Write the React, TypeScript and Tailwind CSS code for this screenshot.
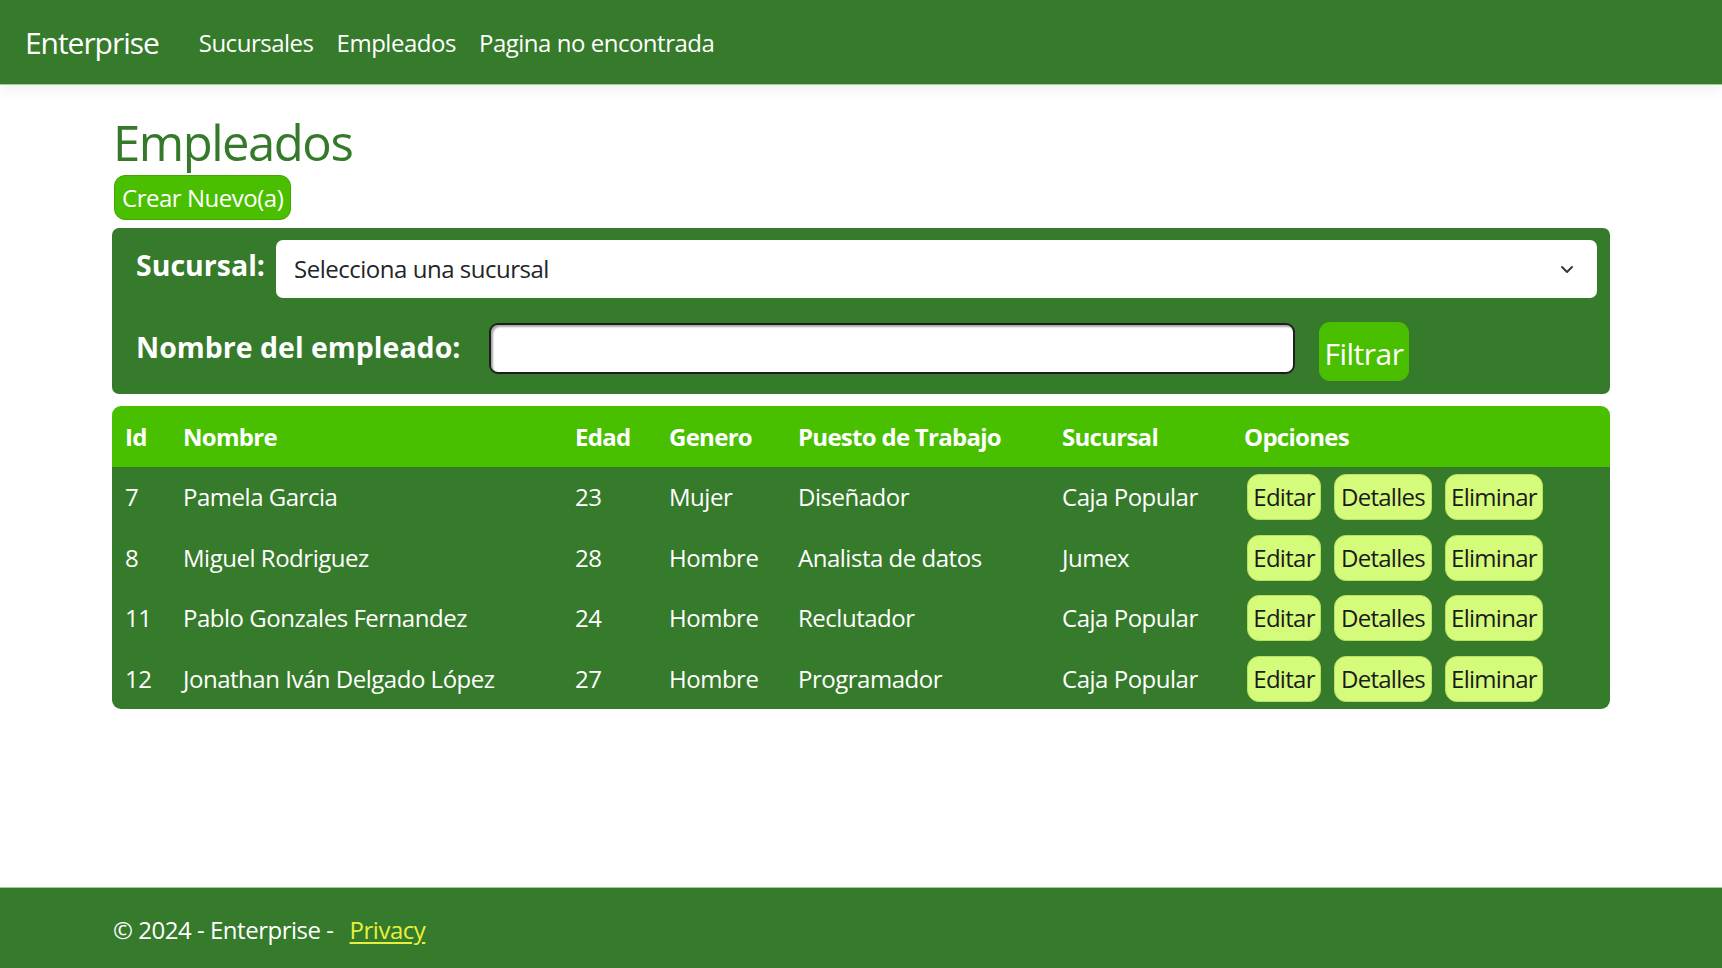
import React from 'react';

const empleados = [
  { id: 7, nombre: 'Pamela Garcia', edad: 23, genero: 'Mujer', puesto: 'Diseñador', sucursal: 'Caja Popular' },
  { id: 8, nombre: 'Miguel Rodriguez', edad: 28, genero: 'Hombre', puesto: 'Analista de datos', sucursal: 'Jumex' },
  { id: 11, nombre: 'Pablo Gonzales Fernandez', edad: 24, genero: 'Hombre', puesto: 'Reclutador', sucursal: 'Caja Popular' },
  { id: 12, nombre: 'Jonathan Iván Delgado López', edad: 27, genero: 'Hombre', puesto: 'Programador', sucursal: 'Caja Popular' },
];

const font = { fontFamily: '"Open Sans", "Noto Sans", sans-serif' };

const OptionButton = ({ label, width }: { label: string; width: string }) => (
  <button className={`${width} h-[46px] rounded-[12px] border border-[#b9e060] bg-[#d5fb7a] text-[24px] tracking-[-0.03em] text-[#1b1b1b]`}>
    {label}
  </button>
);

export default function App() {
  return (
    <div className="min-h-screen flex flex-col bg-white text-[24px] tracking-[-0.02em]" style={font}>
      <header className="h-[85px] bg-[#367a2b] border-b border-[#9fd08a] shadow-[0_6px_14px_rgba(0,0,0,0.06)] flex items-center pl-[25px]">
        <span className="text-[30px] tracking-[-0.035em] text-white mr-[40px]">Enterprise</span>
        <nav className="flex gap-[23px] text-white pt-[2px]">
          <a>Sucursales</a>
          <a>Empleados</a>
          <a>Pagina no encontrada</a>
        </nav>
      </header>

      <main className="flex-1 px-[112px] pt-[26px]">
        <h1 className="text-[49px] leading-[62px] tracking-[-0.03em] text-[#35792a] pl-[1px] font-normal">Empleados</h1>
        <button className="mt-[2px] ml-[2px] h-[45px] px-[7px] rounded-[11px] bg-[#4abf00] border border-[#3fa800] text-white text-[24px]">
          Crear Nuevo(a)
        </button>

        <div className="mt-[8px] bg-[#367a2b] rounded-[7px] pl-[24px] pr-[13px] pt-[12px] pb-[13px] flex flex-col gap-[24px]">
          <div className="flex items-start">
            <label className="text-white font-bold text-[28.5px] tracking-normal leading-[50px] w-[140px] shrink-0">Sucursal:</label>
            <div className="flex-1 h-[58px] bg-white rounded-[7px] flex items-center justify-between pl-[18px] pr-[22px] text-[#212529]">
              <span>Selecciona una sucursal</span>
              <svg width="16" height="16" viewBox="0 0 16 16" fill="none" stroke="#343a40" strokeWidth="2" strokeLinecap="round" strokeLinejoin="round">
                <path d="M3 6l5 5 5-5" />
              </svg>
            </div>
          </div>
          <div className="flex items-start">
            <label className="text-white font-bold text-[28.5px] tracking-normal leading-[50px] w-[353px] shrink-0">Nombre del empleado:</label>
            <input className="mt-[1px] w-[806px] h-[51px] bg-white rounded-[9px] border-[2px] border-[#1e1e1e] shadow-[inset_2px_2px_2px_rgba(0,0,0,0.35)] outline-none" />
            <button className="ml-[24px] w-[90px] h-[59px] rounded-[11px] bg-[#4abf00] text-white text-[30px] pt-[4px]">Filtrar</button>
          </div>
        </div>

        <table className="mt-[12px] w-full table-fixed border-separate border-spacing-0 rounded-[9px] overflow-hidden">
          <colgroup>
            <col className="w-[58px]" />
            <col className="w-[392px]" />
            <col className="w-[94px]" />
            <col className="w-[129px]" />
            <col className="w-[264px]" />
            <col className="w-[182px]" />
            <col />
          </colgroup>
          <thead>
            <tr className="bg-[#48c000] text-white h-[61px] text-left">
              <th className="pl-[13px] font-bold tracking-[-0.03em]">Id</th>
              <th className="pl-[13px] font-bold tracking-[-0.03em]">Nombre</th>
              <th className="pl-[13px] font-bold tracking-[-0.03em]">Edad</th>
              <th className="pl-[13px] font-bold tracking-[-0.03em]">Genero</th>
              <th className="pl-[13px] font-bold tracking-[-0.03em]">Puesto de Trabajo</th>
              <th className="pl-[13px] font-bold tracking-[-0.03em]">Sucursal</th>
              <th className="pl-[13px] font-bold tracking-[-0.03em]">Opciones</th>
            </tr>
          </thead>
          <tbody className="bg-[#367a2b] text-white">
            {empleados.map((e) => (
              <tr key={e.id} className="h-[60.5px]">
                <td className="pl-[13px]">{e.id}</td>
                <td className="pl-[13px]">{e.nombre}</td>
                <td className="pl-[13px]">{e.edad}</td>
                <td className="pl-[13px]">{e.genero}</td>
                <td className="pl-[13px]">{e.puesto}</td>
                <td className="pl-[13px]">{e.sucursal}</td>
                <td className="pl-[16px]">
                  <div className="flex gap-[13px]">
                    <OptionButton label="Editar" width="w-[74px]" />
                    <OptionButton label="Detalles" width="w-[98px]" />
                    <OptionButton label="Eliminar" width="w-[98px]" />
                  </div>
                </td>
              </tr>
            ))}
          </tbody>
        </table>
      </main>

      <footer className="h-[81px] bg-[#367a2b] border-t border-[#9fd08a] flex items-center pl-[113px] pt-[4px] text-white">
        <span>© 2024 - Enterprise - </span>
        <a className="ml-[16px] text-[#e6f03c] underline underline-offset-[3px]">Privacy</a>
      </footer>
    </div>
  );
}
